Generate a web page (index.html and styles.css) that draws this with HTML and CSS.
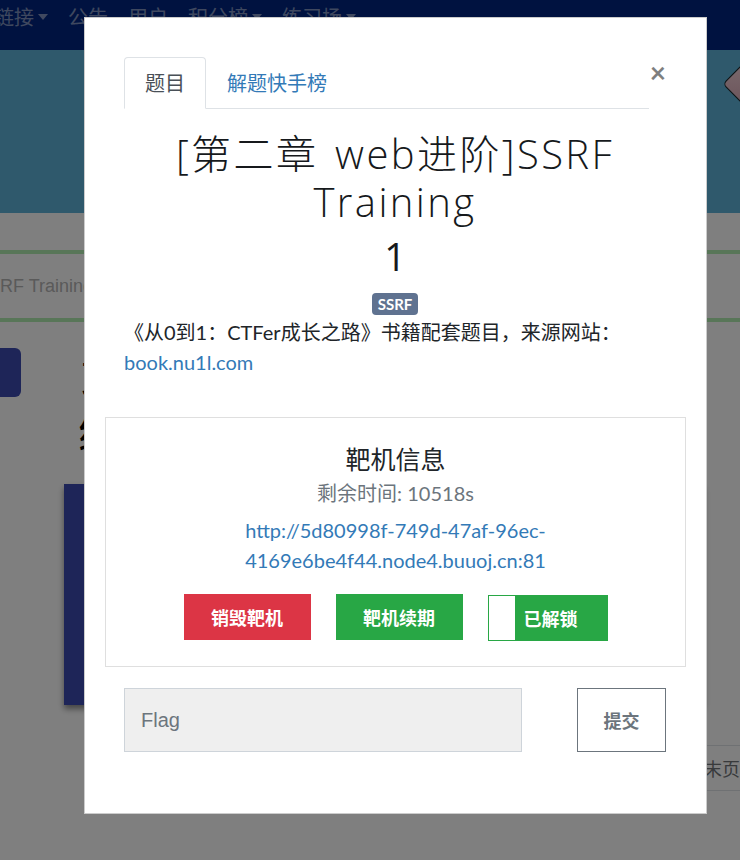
FILE: index.html
```html
<!DOCTYPE html>
<html lang="zh-CN">
<head>
<meta charset="utf-8">
<title>SSRF Training</title>
<link rel="stylesheet" href="styles.css">
</head>
<body>
<div class="page">
  <nav class="navbar">
    <ul class="nav-list">
      <li class="nav-item">链接<span class="caret"></span></li>
      <li class="nav-item">公告</li>
      <li class="nav-item">用户</li>
      <li class="nav-item">积分榜<span class="caret"></span></li>
      <li class="nav-item">练习场<span class="caret"></span></li>
    </ul>
  </nav>
  <header class="banner"><div class="gem"></div></header>
  <div class="crumb"><span class="crumb-text">SSRF Training</span></div>
  <main class="main">
    <div class="side"><div class="side-btn"></div></div>
    <div class="content">
      <div class="big-text">习<br>练</div>
      <div class="panel"></div>
    </div>
  </main>
  <div class="pager"><span class="page-item">末页</span></div>
</div>

<div class="backdrop"></div>

<div class="modal">
  <div class="modal-dialog">
    <div class="modal-content">
      <div class="modal-body">
        <button class="close" type="button">×</button>
        <ul class="nav-tabs">
          <li class="tab active">题目</li>
          <li class="tab">解题快手榜</li>
        </ul>
        <h2 class="challenge-name">[第二章 web进阶]SSRF Training</h2>
        <h3 class="challenge-value">1</h3>
        <div class="tags"><span class="badge">SSRF</span></div>
        <p class="desc">《从0到1：CTFer成长之路》书籍配套题目，来源网站：<br><a class="link" href="#">book.nu1l.com</a></p>
        <div class="card">
          <h4 class="card-title">靶机信息</h4>
          <div class="timer">剩余时间: 10518s</div>
          <div class="url"><a class="link" href="#">http://5d80998f-749d-47af-96ec-4169e6be4f44.node4.buuoj.cn:81</a></div>
          <div class="actions">
            <button class="btn btn-red" type="button">销毁靶机</button>
            <button class="btn btn-green" type="button">靶机续期</button>
            <div class="toggle"><span class="toggle-handle"></span><span class="toggle-on">已解锁</span></div>
          </div>
        </div>
        <div class="submit-row">
          <input class="flag-input" type="text" placeholder="Flag">
          <button class="submit-btn" type="button">提交</button>
        </div>
      </div>
    </div>
  </div>
</div>
</body>
</html>
```

FILE: styles.css
```css
* { box-sizing: border-box; }
html, body { margin: 0; height: 100%; overflow: hidden; }
body {
  font-family: Lato, "Noto Sans CJK SC", sans-serif;
  font-size: 20px;
  line-height: 1.5;
  color: #212529;
  background: #fff;
}

/* ---------- page behind the modal ---------- */
.navbar {
  height: 50px;
  background: #002480;
  padding-top: 2px;
}
.nav-list {
  display: flex;
  gap: 20px;
  margin: 0 0 0 -6px;
  padding: 0;
  list-style: none;
  font-family: "Noto Sans CJK SC", sans-serif;
  font-size: 20px;
  line-height: 30px;
  color: rgba(255, 255, 255, .5);
}
.nav-item { display: flex; align-items: center; }
.caret {
  width: 0; height: 0;
  margin-left: 4px;
  border-top: 6px solid currentColor;
  border-left: 5px solid transparent;
  border-right: 5px solid transparent;
}
.banner {
  height: 163px;
  background: #5eb2d8;
  display: flex;
  justify-content: flex-end;
  align-items: flex-start;
}
.gem {
  width: 32px; height: 32px;
  margin: 18px -21px 0 0;
  transform: rotate(45deg);
  border-radius: 5px;
  border: 1px solid #222;
  background: linear-gradient(135deg, #f6d2da, #d8aab6);
}
.crumb {
  margin-top: 37px;
  height: 72px;
  border-top: 4px solid #b0ecb0;
  border-bottom: 4px solid #b0ecb0;
  display: flex;
  align-items: center;
  overflow: hidden;
}
.crumb-text {
  margin-left: -24px;
  white-space: nowrap;
  font-family: "Liberation Sans", Arial, sans-serif;
  font-size: 18px;
  color: #b4b4b4;
}
.main { display: flex; }
.side { width: 64px; flex: none; }
.side-btn {
  width: 40px; height: 49px;
  margin: 26px 0 0 -19px;
  border-radius: 6px;
  background: #3c4ab0;
}
.content { flex: 1; }
.big-text {
  width: 44px;
  margin: 30px 0 0 14px;
  font-family: "Noto Sans CJK SC", sans-serif;
  font-size: 44px;
  line-height: 52px;
  color: #000;
}
.panel {
  width: 640px;
  height: 221px;
  margin-top: 28px;
  background: #3c4ab0;
  box-shadow: 0 4px 6px rgba(0, 0, 0, .45);
}
.pager {
  margin-top: 40px;
  display: flex;
  justify-content: flex-end;
  margin-right: -13px;
}
.page-item {
  height: 46px;
  padding: 0 12px;
  border: 1px solid #dee2e6;
  line-height: 44px;
  font-family: "Noto Sans CJK SC", sans-serif;
  font-size: 18px;
  color: #707478;
}

/* ---------- backdrop + modal ---------- */
.backdrop {
  position: fixed;
  inset: 0;
  background: rgba(0, 0, 0, .5);
}
.modal {
  position: fixed;
  inset: 0;
  overflow: hidden;
}
.modal-dialog {
  width: 623px;
  margin: 17px 0 0 84px;
}
.modal-content {
  background: #fff;
  border: 1px solid rgba(0, 0, 0, .2);
}
.modal-body { padding: 39px 40px 40px 39px; }

.close {
  float: right;
  margin-top: 1px;
  padding: 0 0 0 1px;
  border: 0;
  background: none;
  font-family: Lato, sans-serif;
  font-size: 28px;
  font-weight: 700;
  line-height: 1;
  color: #000;
  opacity: .5;
}
.nav-tabs {
  display: flex;
  margin: 0;
  padding: 0;
  list-style: none;
  border-bottom: 1px solid #dee2e6;
}
.tab {
  margin-bottom: -1px;
  padding: 10px 20px;
  border: 1px solid transparent;
  border-radius: 4px 4px 0 0;
  line-height: 30px;
  color: #337ab7;
}
.tab.active {
  color: #495057;
  background: #fff;
  border-color: #dee2e6 #dee2e6 #fff;
}

.challenge-name {
  margin: 0;
  padding-top: 21px;
  font-family: "Open Sans", "Noto Sans CJK SC", sans-serif;
  font-weight: 300;
  font-size: 40px;
  line-height: 48px;
  letter-spacing: 2.4px;
  word-spacing: 4px;
  text-align: center;
  color: #16191c;
}
.challenge-value {
  margin: 7px 0 0;
  font-family: "Open Sans", sans-serif;
  font-weight: 400;
  font-size: 38px;
  line-height: 46px;
  text-align: center;
  color: #16191c;
}
.tags {
  display: flex;
  justify-content: center;
  margin-top: 14px;
}
.badge {
  height: 22px;
  padding: 0 6px;
  border-radius: 4px;
  background: #5f7290;
  color: #fff;
  font-weight: 700;
  font-size: 15px;
  line-height: 22px;
}
.desc { margin: 2px 0 0; }
.link { color: #337ab7; text-decoration: none; }

.card {
  margin: 40px -20px 0 -19px;
  padding: 26px 20px 25px;
  border: 1px solid #dfdfdf;
  text-align: center;
}
.card-title {
  margin: 0;
  font-weight: 400;
  font-size: 25px;
  line-height: 30px;
}
.timer { margin-top: 4px; color: #6c757d; }
.url { margin-top: 7px; }
.actions {
  display: flex;
  justify-content: center;
  gap: 25px;
  margin-top: 19px;
}
.btn {
  width: 127px;
  height: 46px;
  border: 0;
  padding: 0;
  font-family: "Noto Sans CJK SC", sans-serif;
  font-weight: 700;
  font-size: 18px;
  color: #fff;
}
.btn-red { background: #dc3545; }
.btn-green { background: #28a745; }
.toggle {
  display: flex;
  width: 120px;
  height: 46px;
  margin-top: 1px;
  border: 1px solid #28a745;
  background: #28a745;
}
.toggle-handle { width: 26px; background: #fff; }
.toggle-on {
  flex: 1;
  padding-right: 20px;
  font-family: "Noto Sans CJK SC", sans-serif;
  font-weight: 700;
  font-size: 18px;
  line-height: 44px;
  color: #fff;
  text-align: center;
}

.submit-row {
  display: flex;
  justify-content: space-between;
  margin: 21px 0 21px;
}
.flag-input {
  width: 398px;
  height: 64px;
  padding: 0 16px;
  border: 1px solid #ced4da;
  background: #efefef;
  font-family: "Liberation Sans", Arial, sans-serif;
  font-size: 20px;
  color: #495057;
}
.flag-input::placeholder { color: #6c757d; }
.submit-btn {
  width: 89px;
  height: 64px;
  border: 1px solid #6c757d;
  background: #fff;
  font-family: "Noto Sans CJK SC", sans-serif;
  font-weight: 700;
  font-size: 18px;
  color: #6c757d;
}
```
